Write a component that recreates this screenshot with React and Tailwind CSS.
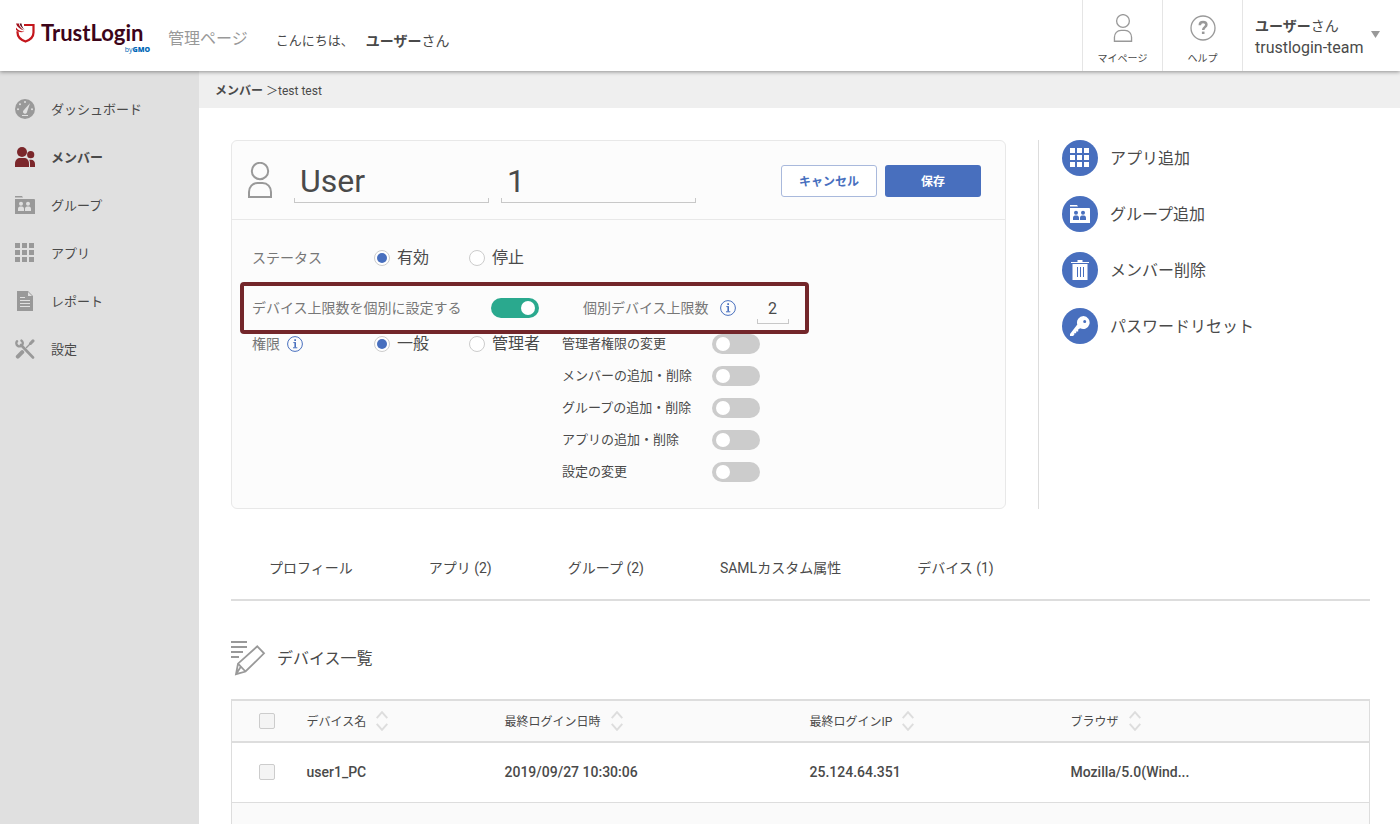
import React from 'react';
import clsx from 'clsx';

const navItems = [
  { label: 'ダッシュボード', icon: DashboardIcon },
  { label: 'メンバー', icon: MembersIcon, active: true },
  { label: 'グループ', icon: GroupIcon },
  { label: 'アプリ', icon: AppsIcon },
  { label: 'レポート', icon: ReportIcon },
  { label: '設定', icon: SettingsIcon },
];

const actions = [
  { label: 'アプリ追加', icon: AppsIcon },
  { label: 'グループ追加', icon: GroupIcon },
  { label: 'メンバー削除', icon: TrashIcon },
  { label: 'パスワードリセット', icon: KeyIcon },
];

const permissions = [
  '管理者権限の変更',
  'メンバーの追加・削除',
  'グループの追加・削除',
  'アプリの追加・削除',
  '設定の変更',
];

const tabs = ['プロフィール', 'アプリ (2)', 'グループ (2)', 'SAMLカスタム属性', 'デバイス (1)'];

const columns = [
  { label: 'デバイス名', width: 'w-[198px]' },
  { label: '最終ログイン日時', width: 'w-[305px]' },
  { label: '最終ログインIP', width: 'w-[261px]' },
  { label: 'ブラウザ', width: '' },
];

const devices = [['user1_PC', '2019/09/27 10:30:06', '25.124.64.351', 'Mozilla/5.0(Wind...']];

function DashboardIcon() {
  return (
    <svg className="w-5 h-5" viewBox="0 0 20 20" fill="currentColor">
      <circle cx="10" cy="10" r="10" />
      <g fill="#e0e0e0">
        <circle cx="3" cy="10.3" r="1" />
        <circle cx="17" cy="10.3" r="1" />
        <circle cx="5" cy="5.2" r="1" />
        <circle cx="10" cy="3" r="1" />
        <path d="M15 4.2 12 13a2 2 0 1 1-3.3-1.7z" />
        <rect x="7" y="16" width="6" height="1" />
      </g>
    </svg>
  );
}

function MembersIcon() {
  return (
    <svg className="w-5 h-5" viewBox="0 0 20 20" fill="currentColor">
      <circle cx="7" cy="5" r="5" />
      <path d="M0 20v-3.500C0 13 2.500 11 5 11h4c2.800 0 5 2 5 5.500V20z" />
      <circle cx="15.700" cy="7.700" r="3.600" />
      <path d="M14.300 12.700H16c2.500 0 4 1.800 4 4.300v3h-5v-3.500c0-1.500-.2-2.700-.7-3.800z" />
    </svg>
  );
}

function GroupIcon() {
  return (
    <svg className="w-5 h-5" viewBox="0 0 20 20">
      <path
        fill="currentColor"
        fillRule="evenodd"
        d="M0 1h7l1 1.500H0zM0 4h19a1 1 0 0 1 1 1v14H0zM6 6.700a2 2 0 1 0 0 4 2 2 0 0 0 0-4zM13 6.700a2 2 0 1 0 0 4 2 2 0 0 0 0-4zM3 16h6v-2c0-1.600-.8-2.600-2-2.600H5c-1.200 0-2 1-2 2.600zM10 16h6v-2c0-1.600-.8-2.600-2-2.600h-2c-1.200 0-2 1-2 2.600z"
      />
    </svg>
  );
}

function AppsIcon() {
  return (
    <svg className="w-5 h-5" viewBox="0 0 20 20" fill="currentColor" shapeRendering="crispEdges">
      {[0, 7, 14].map((y) => [0, 7, 14].map((x) => <rect key={`${x}-${y}`} x={x} y={y} width="5" height="5" />))}
    </svg>
  );
}

function ReportIcon() {
  return (
    <svg className="w-5 h-5" viewBox="0 0 20 20">
      <path fill="currentColor" d="M2 0h11l5 5v15H2z" />
      <path fill="#e0e0e0" d="M13 1v4h4zM5 6h5v1H5zM5 9h10v1H5zM5 12h10v1H5zM5 15h10v1H5z" />
    </svg>
  );
}

function SettingsIcon() {
  return (
    <svg className="w-5 h-5" viewBox="0 0 20 20" fill="none" stroke="currentColor" strokeLinecap="round">
      <path d="m6 6 12 12.500" strokeWidth="2.600" />
      <path d="M2 2.200A3.200 3.200 0 1 0 6.500 1.600" strokeWidth="2.400" />
      <path d="m2.800 17.600 4.400-4.400" strokeWidth="4" />
      <path d="m11.500 8.500 4-4" strokeWidth="1.400" />
      <path d="m15.500 4.500 2.500-2.600" strokeWidth="3" />
    </svg>
  );
}

function TrashIcon() {
  return (
    <svg className="w-5 h-5" viewBox="0 0 20 20">
      <path fill="currentColor" d="M7.500 0h5v2H19v1H1V2h6.500zM2.500 4h15v16h-15z" />
      <path stroke="#486fbe" d="M7.500 7v10M10.500 7v10M13.500 7v10" />
    </svg>
  );
}

function KeyIcon() {
  return (
    <svg className="w-5 h-5" viewBox="0 0 20 20" fill="currentColor">
      <path
        fillRule="evenodd"
        d="M13.500 0a6.500 6.500 0 0 0-6.200 8.500L0 18v2h3l1.300-1.200v-1.600h1.900v-1.700h2v-1.900l2-1.300A6.500 6.500 0 1 0 13.500 0zM14.700 4a1.500 1.500 0 1 1 0 3 1.500 1.500 0 0 1 0-3z"
      />
    </svg>
  );
}

function PersonIcon({ className, stroke }) {
  return (
    <svg className={className} viewBox="0 0 24 36" fill="none" stroke="#999" strokeWidth={stroke}>
      <circle cx="12" cy="9" r="8.200" />
      <path d="M1 35v-5c0-5 3.500-9 8.500-9h5c5 0 8.500 4 8.500 9v5z" />
    </svg>
  );
}

function HelpIcon() {
  return (
    <svg className="w-[26px] h-[26px]" viewBox="0 0 26 26" fill="none" stroke="#999">
      <circle cx="13" cy="13" r="12" strokeWidth="1.300" />
      <path d="M9.800 10.200c0-2 1.300-3.200 3.300-3.200s3.300 1.100 3.300 2.800c0 2.300-3.200 2.400-3.200 5.200" strokeWidth="2.500" />
      <path d="M11.900 17.800h2.600" strokeWidth="2.400" />
    </svg>
  );
}

function InfoIcon() {
  return (
    <svg className="w-4 h-4 shrink-0" viewBox="0 0 16 16" fill="none" stroke="#486fbe">
      <circle cx="8" cy="8" r="7.400" />
      <path d="M8.200 6.500v5" strokeWidth="1.600" />
      <path d="M6.300 6.600h2.500M6 11.800h4.300" />
      <path d="M7.300 4.100h1.700" strokeWidth="1.700" />
    </svg>
  );
}

function PencilIcon() {
  return (
    <svg className="w-[35px] h-[35px]" viewBox="0 0 35 35" fill="none" stroke="#999" strokeWidth="1.800">
      <path d="M0 1h16M0 6h16M0 11h12M0 16h8" />
      <path d="M26.300 5.300 33 12.300 14.500 30.500 5 33.200l2-10.500zM7 22.700l7.500 7.800M5 33.200l4.500-7" />
    </svg>
  );
}

function SortIcon() {
  return (
    <svg className="w-3 h-5" viewBox="0 0 12 20" fill="none" stroke="#ddd" strokeWidth="2">
      <path d="m.7 7.200 5.300-6 5.300 6M.7 12.800l5.300 6 5.300-6" />
    </svg>
  );
}

function Logo() {
  return (
    <a href="#" className="relative flex w-[134px] items-center gap-[6px] pb-[6px]">
      <svg className="w-[19px] h-5 shrink-0" viewBox="0 0 19 20">
        <path d="M8 2h9.500v7.500c0 4.200-2.800 7.200-8 9C4.300 16.700 1.500 13.700 1.500 9.500V8.300" fill="none" stroke="#c4161c" strokeWidth="2.200" />
        <path d="M0 .5h2.800C3.300 3.300 5 5.500 8.300 7.500 4 6.300 1 4 0 .5z" fill="#a3141f" />
        <path d="M3.600 .5h1.900c.2 2.300 1.300 4.400 3.300 6.400C6 5.300 4.200 3.200 3.600.5z" fill="#5a0c1c" />
        <path d="M0 4.500c1.800 2.500 4.500 4 8.500 4.200C5 9.800 1.500 8.800 0 6.800z" fill="#c4161c" />
      </svg>
      <span className="font-['Lato',sans-serif] text-[22px] leading-6 font-bold text-[#3c0519]">TrustLogin</span>
      <span className="absolute right-0 -bottom-[3px] font-['Open_Sans',sans-serif] text-[7px] leading-2 text-[#0068b7]">
        by<b className="font-extrabold">GMO</b>
      </span>
    </a>
  );
}

function Header() {
  return (
    <header className="relative z-10 flex h-[71px] shrink-0 items-stretch bg-white shadow-[0_1px_4px_rgba(0,0,0,0.4)]">
      <div className="flex flex-1 items-center pl-4">
        <Logo />
        <span className="ml-[18px] pt-[6px] text-base text-[#999]">管理ページ</span>
        <span className="ml-7 pt-[10px] text-[13px]">こんにちは、</span>
        <span className="ml-3 pt-[10px] text-sm">
          <b>ユーザー</b>
          さん
        </span>
      </div>
      <a href="#" className="flex w-20 flex-col items-center border-l border-[#e5e5e5] pt-[14px]">
        <PersonIcon className="h-7 w-5" stroke="1.700" />
        <span className="mt-2 text-[10px] leading-[18px]">マイページ</span>
      </a>
      <a href="#" className="flex w-20 flex-col items-center border-l border-[#e5e5e5] pt-[15px]">
        <HelpIcon />
        <span className="mt-[9px] text-[10px] leading-[18px]">ヘルプ</span>
      </a>
      <button type="button" className="flex w-[158px] items-center justify-between border-l border-[#e5e5e5] pr-5 pl-3 text-left">
        <span className="pt-[2px]">
          <span className="block text-sm leading-[22px]">
            <b>ユーザー</b>
            さん
          </span>
          <span className="block text-base leading-[22px]">trustlogin-team</span>
        </span>
        <svg className="mb-[3px] h-[7px] w-[9px]" viewBox="0 0 9 7" fill="#999">
          <path d="M0 0h9L4.500 7z" />
        </svg>
      </button>
    </header>
  );
}

function Sidebar() {
  return (
    <nav className="w-[199px] shrink-0 bg-[#e0e0e0] pt-[14px]">
      {navItems.map(({ label, icon: Icon, active }) => (
        <a key={label} href="#" className="flex h-12 items-center gap-4 pl-[15px] text-[13px]">
          <span className={active ? 'text-[#7b272b]' : 'text-[#999]'}>
            <Icon />
          </span>
          <span className={clsx('pt-[2px]', active && 'font-bold')}>{label}</span>
        </a>
      ))}
    </nav>
  );
}

function Radio({ name, label, checked, width }) {
  return (
    <label className={clsx('flex items-center gap-[7px] text-base leading-5', width)}>
      <input
        type="radio"
        name={name}
        defaultChecked={checked}
        className="relative h-4 w-4 shrink-0 appearance-none rounded-full border border-[#ccc] bg-white before:absolute before:inset-[2px] before:rounded-full checked:before:bg-[#486fbe]"
      />
      {label}
    </label>
  );
}

function Toggle({ id, checked }) {
  return (
    <input
      id={id}
      type="checkbox"
      role="switch"
      defaultChecked={checked}
      className="relative h-5 w-12 shrink-0 appearance-none rounded-full bg-[#ccc] before:absolute before:top-[3px] before:left-1 before:h-[14px] before:w-[14px] before:rounded-full before:bg-white checked:bg-[#2aa98e] checked:before:left-[30px]"
    />
  );
}

// text box with only a bottom line and short upturned ends
function LineInput({ id, label, value, box, text }) {
  return (
    <span className={clsx('relative block after:pointer-events-none after:absolute after:inset-x-0 after:bottom-0 after:h-[5px] after:border after:border-t-0 after:border-[#c8c8c8]', box)}>
      <input id={id} aria-label={label} defaultValue={value} className={clsx('h-full w-full bg-transparent outline-none', text)} />
    </span>
  );
}

function MemberCard() {
  return (
    <section className="min-w-0 flex-1 rounded-md border border-[#e8e8e8] bg-[#fcfcfc]">
      <div className="flex h-[79px] items-center border-b border-[#e8e8e8] pr-6 pl-4">
        <PersonIcon className="h-9 w-6" stroke="2" />
        <div className="mt-[2px] ml-[22px] flex gap-3">
          <LineInput label="姓" value="User" box="h-11 w-[195px]" text="px-[6px] text-[32px]" />
          <LineInput label="名" value="1" box="h-11 w-[195px]" text="px-[6px] text-[32px]" />
        </div>
        <div className="mt-[2px] ml-auto flex gap-2 text-xs font-bold">
          <button type="button" className="h-8 w-24 rounded-[3px] border border-[#a9b9dc] bg-white pt-[2px] text-[#486fbe]">
            キャンセル
          </button>
          <button type="button" className="h-8 w-24 rounded-[3px] bg-[#486fbe] pt-[2px] text-white">
            保存
          </button>
        </div>
      </div>

      <div className="pt-6 pb-[26px] pl-2">
        <div className="flex h-7 items-center pl-3">
          <span className="w-[122px] text-sm text-[#777]">ステータス</span>
          <Radio name="status" label="有効" checked width="w-[95px]" />
          <Radio name="status" label="停止" />
        </div>

        <div className="mt-[10px] flex h-[52px] w-fit items-center rounded border-4 border-[#73262a] pr-4 pl-2 text-sm text-[#777]">
          <label htmlFor="device-limit" className="w-[239px]">
            デバイス上限数を個別に設定する
          </label>
          <Toggle id="device-limit" checked />
          <label htmlFor="device-count" className="mr-[11px] ml-11">
            個別デバイス上限数
          </label>
          <InfoIcon />
          <span className="ml-[21px] text-[#4a4a4a]">
            <LineInput id="device-count" value="2" box="h-8 w-8" text="text-center text-base" />
          </span>
        </div>

        <div className="flex items-start pl-3">
          <div className="flex h-5 w-[122px] items-center gap-[7px] text-sm text-[#777]">
            権限
            <InfoIcon />
          </div>
          <Radio name="role" label="一般" checked width="w-[95px]" />
          <Radio name="role" label="管理者" width="w-[93px]" />
          <ul className="flex flex-col gap-3">
            {permissions.map((label, i) => (
              <li key={label} className="flex h-5 items-center text-[13px]">
                <label htmlFor={`permission-${i}`} className="w-[150px]">
                  {label}
                </label>
                <Toggle id={`permission-${i}`} />
              </li>
            ))}
          </ul>
        </div>
      </div>
    </section>
  );
}

function Actions() {
  return (
    <aside className="flex w-[332px] shrink-0 flex-col items-start gap-5 border-l border-[#ddd] pl-[23px]">
      {actions.map(({ label, icon: Icon }) => (
        <button key={label} type="button" className="flex items-center gap-3 text-base">
          <span className="flex h-9 w-9 items-center justify-center rounded-full bg-[#486fbe] text-white">
            <Icon />
          </span>
          <span className="pt-[2px]">{label}</span>
        </button>
      ))}
    </aside>
  );
}

function Checkbox({ label }) {
  return (
    <input
      type="checkbox"
      aria-label={label}
      className="block h-4 w-4 appearance-none rounded-[2px] border border-[#ccc] bg-[#f4f4f4] checked:bg-[#486fbe]"
    />
  );
}

function DeviceTable() {
  return (
    <table className="mt-[23px] w-full table-fixed border-collapse border border-[#ddd] text-left">
      <thead>
        <tr className="h-[42px] border-y-2 border-[#ddd] bg-[#fafafa] text-xs">
          <th className="w-[75px] pl-[27px]">
            <Checkbox label="すべて選択" />
          </th>
          {columns.map(({ label, width }) => (
            <th key={label} className={clsx('font-normal', width)}>
              <button type="button" className="flex items-center gap-[10px]">
                <span className="pt-[2px]">{label}</span>
                <SortIcon />
              </button>
            </th>
          ))}
        </tr>
      </thead>
      <tbody className="text-sm font-medium">
        {devices.map((device) => (
          <tr key={device[0]} className="h-[60px] border-b border-[#ddd] bg-white">
            <td className="pl-[27px]">
              <Checkbox label={device[0]} />
            </td>
            {device.map((value) => (
              <td key={value}>{value}</td>
            ))}
          </tr>
        ))}
        <tr className="h-[60px] bg-[#fafafa]">
          <td colSpan={5} />
        </tr>
      </tbody>
    </table>
  );
}

const App = () => {
  return (
    <div className="flex h-screen flex-col overflow-hidden bg-white font-['Roboto','Noto_Sans_CJK_JP',sans-serif] text-[#4a4a4a]">
      <Header />
      <div className="flex min-h-0 flex-1">
        <Sidebar />
        <main className="min-w-0 flex-1 overflow-hidden">
          <div className="flex h-[37px] items-center bg-[#efefef] pt-[2px] pl-4 text-xs">
            <a href="#" className="mr-[3px] font-bold">
              メンバー
            </a>
            ＞test test
          </div>
          <div className="pt-8 pr-[30px] pl-8">
            <div className="flex gap-8">
              <MemberCard />
              <Actions />
            </div>

            <nav className="mt-[26px] flex border-b-2 border-[#ddd] text-sm">
              {tabs.map((tab) => (
                <a key={tab} href="#" className="flex h-16 items-center px-[38px] pt-[2px]">
                  {tab}
                </a>
              ))}
            </nav>

            <h2 className="mt-10 flex items-center gap-[11px] text-base">
              <PencilIcon />
              デバイス一覧
            </h2>
            <DeviceTable />
          </div>
        </main>
      </div>
    </div>
  );
};

export default App;
